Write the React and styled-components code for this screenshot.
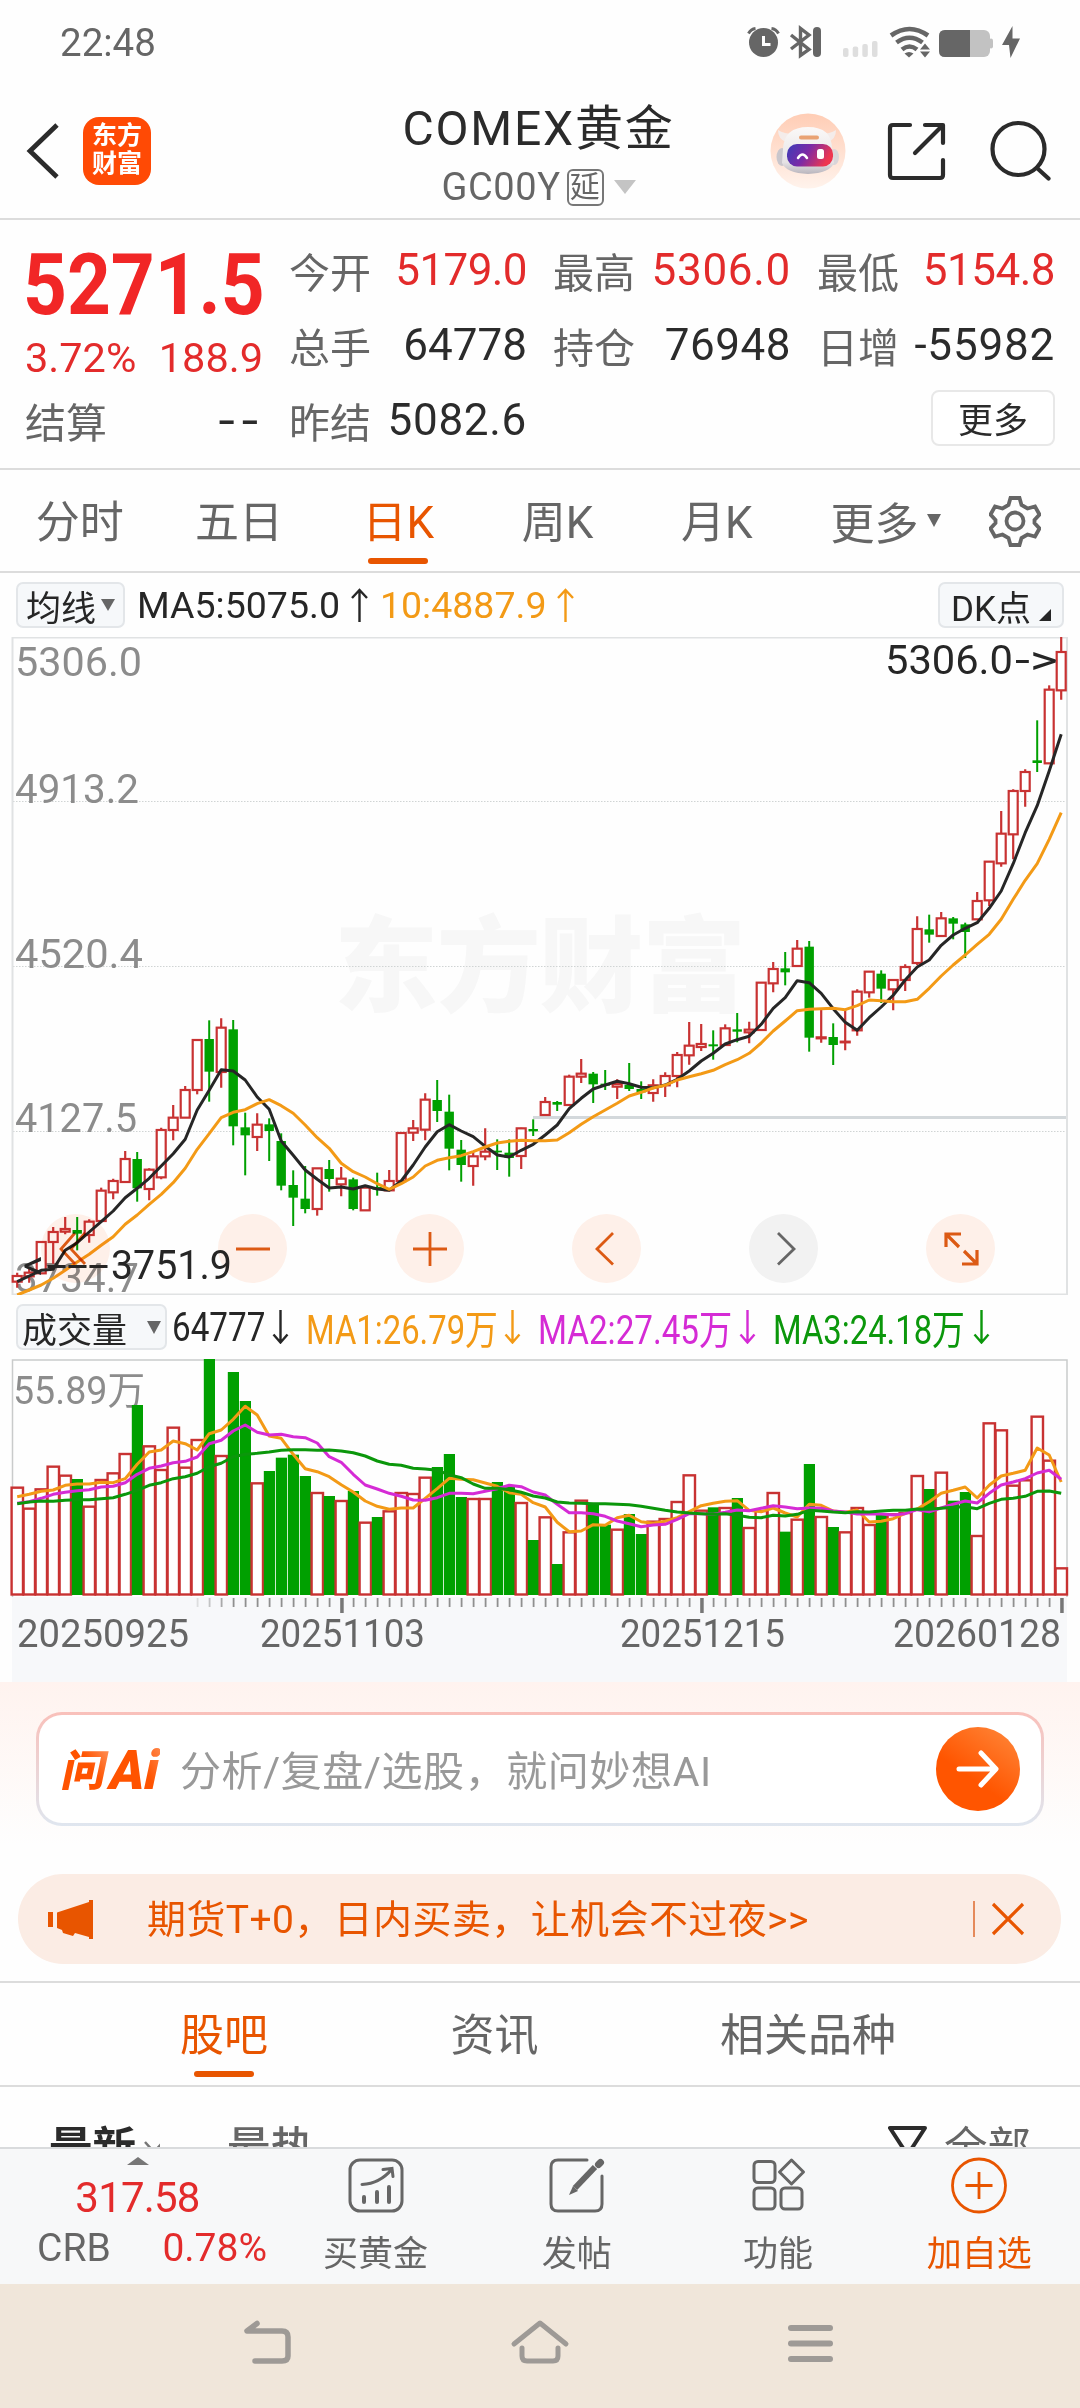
import React from "react";
import styled, { createGlobalStyle } from "styled-components";

const GlobalStyle = createGlobalStyle`
  * {
    box-sizing: border-box;
  }

  body {
    margin: 0;
    background: #fefefe;
    font-family: Roboto, "Noto Sans CJK SC", sans-serif;
    color: #2b2b2b;
  }

  svg {
    display: block;
    flex: none;
  }
`;

const RED = "#c83232";
const GREEN = "#00a000";
const BLACK = "#262626";
const YELLOW = "#f39a16";
const PURPLE = "#d52bd5";
const DGREEN = "#0b970b";
const ACCENT = "#e85500";

const PITCH = 12;
const FIRST_X = 17.2;
const xOf = (i) => FIRST_X + i * PITCH;

// [type, high, body top, body bottom, low], in thirds of a pixel
const candles = [
  ["r", 935, 945, 962, 980], ["r", 920, 935, 946, 965], ["r", 843, 843, 937, 937],
  ["r", 798, 813, 843, 908], ["r", 768, 804, 812, 820], ["g", 768, 807, 818, 868],
  ["r", 775, 782, 822, 845], ["r", 680, 689, 780, 780], ["r", 653, 660, 694, 715],
  ["r", 570, 594, 663, 663], ["g", 573, 594, 682, 722], ["r", 622, 626, 684, 718],
  ["r", 500, 507, 649, 655], ["r", 432, 470, 507, 538], ["r", 375, 387, 470, 470],
  ["r", 237, 237, 387, 400], ["g", 178, 234, 332, 422], ["r", 172, 200, 333, 380],
  ["g", 177, 205, 496, 553], ["g", 455, 499, 523, 643], ["r", 457, 491, 528, 570],
  ["g", 472, 490, 510, 600], ["g", 517, 540, 674, 688], ["g", 628, 672, 710, 795],
  ["g", 615, 713, 744, 757], ["r", 622, 622, 744, 764], ["g", 597, 624, 654, 692],
  ["r", 618, 653, 670, 706], ["g", 650, 655, 744, 748], ["r", 678, 680, 748, 748],
  ["g", 635, 678, 686, 704], ["r", 627, 660, 688, 688], ["r", 516, 516, 660, 660],
  ["r", 477, 502, 515, 540], ["r", 397, 416, 506, 538], ["g", 357, 417, 450, 483],
  ["g", 401, 452, 563, 628], ["g", 537, 566, 612, 662], ["r", 570, 586, 615, 674],
  ["r", 502, 572, 586, 598], ["g", 535, 569, 574, 627], ["g", 535, 575, 591, 647],
  ["r", 500, 502, 585, 624], ["g", 475, 504, 511, 525], ["r", 408, 423, 462, 462],
  ["g", 420, 423, 431, 450], ["r", 341, 347, 432, 432], ["r", 294, 338, 347, 366],
  ["g", 333, 338, 370, 426], ["g", 327, 368, 374, 387], ["r", 355, 369, 377, 414],
  ["g", 306, 372, 384, 390], ["g", 361, 384, 394, 414], ["r", 355, 373, 396, 422],
  ["r", 334, 345, 373, 408], ["r", 273, 282, 345, 379], ["r", 183, 254, 283, 311],
  ["r", 189, 249, 258, 270], ["g", 208, 250, 256, 296], ["r", 190, 202, 252, 252],
  ["g", 156, 205, 212, 244], ["r", 182, 206, 214, 247], ["r", 65, 65, 207, 207],
  ["r", 3, 24, 67, 94], ["g", -27, 22, 34, 73], ["r", -63, -37, 15, 18],
  ["g", -60, -43, 230, 272], ["r", 145, 229, 232, 245], ["g", 187, 228, 252, 312],
  ["r", 145, 242, 244, 268], ["r", 85, 92, 208, 224], ["r", 32, 32, 94, 110],
  ["g", 28, 38, 83, 126], ["r", 55, 57, 85, 148], ["r", 10, 18, 57, 90],
  ["r", -134, -96, 6, 12], ["g", -139, -95, -79, -55], ["r", -147, -128, -75, -75],
  ["g", -132, -128, -112, -65], ["g", -115, -110, -87, -9], ["r", -207, -180, -125, -125],
  ["r", -298, -298, -182, -165], ["r", -450, -382, -293, -283], ["r", -515, -510, -380, -305],
  ["r", -575, -567, -510, -463], ["g", -722, -602, -594, -567], ["r", -827, -814, -593, -593],
  ["r", -972, -927, -812, -784],
];

const ma5 = [
  962, 945, 928, 925, 868, 845, 813, 782, 750, 710, 682, 652, 615, 578, 535, 447, 388, 326, 330,
  357, 408, 445, 540, 583, 627, 655, 681, 678, 684, 674, 684, 688, 660, 612, 558, 512, 491, 510,
  527, 556, 582, 588, 568, 550, 522, 492, 443, 412, 384, 372, 361, 368, 379, 380, 372, 355, 330,
  300, 277, 249, 236, 226, 190, 142, 110, 59, 65, 97, 143, 184, 208, 170, 138, 103, 57, 18, -3,
  -47, -78, -98, -115, -158, -210, -292, -385, -466, -570, -680,
];

const ma10 = [
  1002, 987, 972, 952, 928, 903, 880, 853, 827, 790, 762, 730, 700, 665, 622, 565, 518, 470, 454,
  446, 428, 416, 434, 457, 492, 530, 562, 607, 632, 648, 668, 685, 668, 648, 615, 598, 590, 584,
  572, 558, 546, 541, 538, 539, 539, 537, 515, 490, 467, 447, 427, 405, 394, 381, 373, 357, 347,
  338, 328, 311, 296, 277, 246, 210, 180, 149, 145, 143, 142, 146, 134, 117, 119, 122, 122, 115,
  82, 45, 12, -18, -50, -80, -125, -185, -242, -292, -365, -445,
];

const volumes = [
  560, 623, 565, 497, 524, 537, 617, 537, 517, 459, 315, 436, 507, 380, 500, 417, 177, 465, 216,
  303, 547, 513, 473, 464, 528, 576, 588, 600, 573, 665, 651, 631, 576, 579, 530, 501, 462, 591,
  594, 594, 546, 560, 606, 720, 649, 792, 694, 599, 615, 674, 686, 642, 702, 662, 654, 603, 523,
  629, 622, 621, 594, 681, 630, 576, 695, 656, 492, 648, 681, 694, 621, 672, 640, 640, 636, 525,
  567, 515, 602, 576, 705, 367, 388, 554, 538, 347, 479, 802,
];

const volMa1 = [
  587, 580, 571, 567, 553, 549, 549, 544, 545, 533, 490, 453, 447, 420, 428, 447, 398, 387, 355,
  316, 342, 405, 412, 460, 503, 512, 527, 551, 573, 600, 616, 625, 621, 621, 592, 563, 532, 535,
  536, 546, 556, 575, 580, 605, 618, 664, 692, 690, 671, 673, 650, 643, 662, 667, 661, 650, 632,
  614, 607, 601, 599, 628, 632, 621, 636, 648, 610, 613, 630, 634, 627, 663, 661, 653, 637, 624,
  602, 577, 568, 558, 591, 553, 525, 517, 508, 441, 462, 543,
];

const volMa2 = [
  607, 602, 592, 580, 574, 569, 566, 558, 556, 545, 520, 502, 495, 485, 481, 468, 428, 418, 390,
  372, 394, 402, 400, 407, 410, 426, 467, 484, 520, 552, 564, 577, 586, 597, 598, 590, 577, 577,
  578, 571, 563, 553, 557, 573, 582, 610, 635, 635, 638, 646, 660, 668, 677, 672, 670, 655, 638,
  638, 640, 634, 627, 629, 622, 614, 618, 623, 621, 622, 630, 633, 639, 638, 639, 642, 638, 626,
  632, 621, 610, 600, 606, 577, 552, 543, 533, 516, 508, 535,
];

const volMa3 = [
  608, 603, 600, 601, 598, 596, 596, 593, 590, 580, 568, 553, 545, 533, 527, 517, 497, 487, 467,
  460, 457, 453, 448, 446, 446, 448, 447, 450, 455, 465, 480, 490, 493, 502, 504, 508, 521, 530,
  549, 562, 562, 566, 574, 585, 591, 603, 606, 607, 608, 608, 610, 611, 616, 622, 628, 633, 636,
  638, 640, 638, 643, 649, 650, 643, 645, 640, 628, 630, 633, 635, 632, 633, 630, 628, 628, 624,
  625, 622, 619, 617, 623, 607, 595, 592, 586, 571, 570, 577,
];

// closed above the previous day although the candle itself is green
const RISING_VOLUME = 85;

const linePoints = (list, offset) =>
  list.map((v, i) => `${xOf(i)},${(v / 3 + offset).toFixed(1)}`).join(" ");

const Page = styled.div`
  width: 1080px;
  height: 2408px;
  display: flex;
  flex-direction: column;
  overflow: hidden;
  background: #fefefe;
`;

const StatusBar = styled.div`
  height: 84px;
  padding: 0 60px;
  display: flex;
  justify-content: space-between;
  align-items: center;
  font-size: 38.5px;
  color: #666;
`;

const Header = styled.header`
  height: 136px;
  padding: 0 29px 0 26px;
  display: grid;
  grid-template-columns: 1fr 290px 1fr;
  border-bottom: 2px solid #dcdcdc;
`;

const HeaderLeft = styled.div`
  display: flex;
  align-items: center;
  gap: 23px;
`;

const AppLogo = styled.div`
  width: 68px;
  height: 68px;
  border-radius: 16px;
  background: #ff4a05;
  color: #fff;
  font-size: 25px;
  font-weight: 700;
  line-height: 28px;
  text-align: center;
  padding-top: 5px;
`;

const HeaderTitle = styled.div`
  display: flex;
  flex-direction: column;
  align-items: center;
  white-space: nowrap;

  h1 {
    margin: 16px 0 0;
    font-size: 48px;
    font-weight: 400;
    line-height: 58px;
    letter-spacing: 1.8px;
  }
`;

const Code = styled.div`
  display: flex;
  align-items: center;
  margin-top: 4px;
  height: 50px;
  font-size: 38px;
  letter-spacing: 0.6px;
  color: #666;
`;

const DelayTag = styled.span`
  width: 37px;
  height: 37px;
  margin: 0 10px 0 6px;
  border: 2px solid #777;
  border-radius: 6px;
  font-size: 30px;
  line-height: 32px;
  text-align: center;
`;

const Triangle = styled.i`
  border: solid transparent;
  border-width: ${(p) => p.$h}px ${(p) => p.$w / 2}px 0;
  border-top-color: ${(p) => p.$color || "#666"};
`;

const HeaderRight = styled.div`
  display: flex;
  align-items: center;
  justify-content: flex-end;
`;

const Quote = styled.section`
  height: 250px;
  padding: 12px 24px 0 25px;
  display: grid;
  grid-template-columns: repeat(4, 238px);
  grid-template-rows: repeat(3, 75px);
  column-gap: 26px;
  border-bottom: 2px solid #dcdcdc;
`;

const PriceBox = styled.div`
  grid-row: 1 / 3;
  color: #f12626;
`;

const Price = styled.div`
  height: 103px;
  margin-left: -2px;
  font-size: 85px;
  font-weight: 700;
  line-height: 107px;
  white-space: nowrap;
  transform: scaleX(0.9);
  transform-origin: left;
`;

const Change = styled.div`
  display: flex;
  justify-content: space-between;
  font-size: 41.5px;
  line-height: 46px;
  color: #e32b2b;
`;

const Stat = styled.div`
  display: flex;
  justify-content: space-between;
  align-items: center;
  white-space: nowrap;
  font-size: 41px;
  color: #666;

  b {
    font-size: 44px;
    font-weight: 400;
    letter-spacing: ${(p) => p.$ls || 0}px;
    color: ${(p) => (p.$up ? "#e32b2b" : "#2b2b2b")};
  }
`;

const Dashes = styled.b`
  && {
    font-family: Inter, sans-serif;
    letter-spacing: 3px;
  }
`;

const MoreButton = styled.button`
  grid-column: 4;
  justify-self: end;
  align-self: center;
  width: 124px;
  height: 56px;
  margin-bottom: 4px;
  padding: 0 0 2px;
  border: 2px solid #e8e8e8;
  border-radius: 8px;
  background: #fff;
  font: inherit;
  font-size: 35px;
  color: #2b2b2b;
`;

const PeriodTabs = styled.nav`
  height: 103px;
  display: flex;
  border-bottom: 2px solid #dcdcdc;
`;

const Tab = styled.div`
  flex: 0 0 ${(p) => p.$w}px;
  display: flex;
  flex-direction: column;
  align-items: center;
  padding-top: 19px;
  font-size: 44px;
  line-height: 68px;
  white-space: nowrap;
  color: ${(p) => (p.$active ? ACCENT : "#666")};

  &::after {
    content: "";
    width: 60px;
    height: 6px;
    margin-top: 1px;
    border-radius: 3px;
    background: ${(p) => (p.$active ? ACCENT : "transparent")};
  }
`;

const TabMore = styled.div`
  flex: 1;
  display: flex;
  align-items: center;
  padding-left: 34px;
  font-size: 44px;
  color: #666;

  i {
    margin: 0 48px 0 9px;
  }
`;

const Legend = styled.div`
  height: ${(p) => p.$h}px;
  padding: 0 16px;
  display: flex;
  align-items: center;
  font-size: 37.5px;
  white-space: nowrap;
`;

const Chip = styled.div`
  flex: none;
  width: ${(p) => p.$w}px;
  height: 46px;
  padding: 0 ${(p) => p.$pad || 8}px;
  display: flex;
  align-items: center;
  justify-content: space-between;
  border: 2px solid #e3e6e9;
  border-radius: 7px;
  background: #f6f8fa;
  font-size: 35px;
  color: ${BLACK};
`;

const LegendItem = styled.span`
  display: flex;
  align-items: center;
  margin-left: ${(p) => p.$ml}px;
  color: ${(p) => p.$color};

  svg {
    margin-left: 11px;
  }
`;

const VolumeItem = styled(LegendItem)`
  flex: 0 0 ${(p) => p.$w}px;
  justify-content: space-between;
  font-size: 40px;

  svg {
    margin-left: 0;
  }
`;

// squeezes the text into its box without changing the glyph height
const Narrow = styled.span`
  flex: 0 0 ${(p) => p.$w}px;
  width: ${(p) => p.$w}px;
  transform: scaleX(${(p) => p.$scale});
  transform-origin: left;
`;

const Spacer = styled.div`
  flex: 1;
`;

const ChartBox = styled.div`
  position: relative;
  height: 658px;
`;

const Controls = styled.div`
  position: absolute;
  left: 41px;
  top: 577px;
  display: flex;
  gap: 108px;
`;

const RoundButton = styled.div`
  width: 69px;
  height: 69px;
  border-radius: 50%;
  display: grid;
  place-items: center;
  mix-blend-mode: multiply;
  background: ${(p) => (p.$muted ? "#f3f3f3" : "#fff1ea")};
  color: ${(p) => (p.$muted ? "#666" : "#dd5a14")};
`;

const AskSection = styled.section`
  height: 192px;
  padding: 30px 36px 0;
  background: linear-gradient(#fff3ef, #fefefe 85%);
`;

const AskBox = styled.div`
  height: 114px;
  padding: 0 21px;
  display: flex;
  align-items: center;
  border: 3px solid transparent;
  border-radius: 26px;
  background:
    linear-gradient(#fff, #fff) padding-box,
    linear-gradient(#f9c0ba, #dfe6ef) border-box;
`;

const AskHint = styled.div`
  flex: 1;
  margin: -2px 0 0 20px;
  font-size: 41px;
  letter-spacing: 0.6px;
  color: #999;
`;

const SendButton = styled.div`
  width: 84px;
  height: 84px;
  border-radius: 50%;
  display: grid;
  place-items: center;
  background: linear-gradient(215deg, #ff8a3d, #ff5500 60%);
`;

const Banner = styled.div`
  height: 90px;
  margin: 0 19px 17px 18px;
  padding: 0 36px 0 28px;
  display: flex;
  align-items: center;
  border-radius: 45px;
  background: #fbece4;
  color: ${ACCENT};
`;

const BannerText = styled.div`
  flex: 1;
  margin: -6px 0 0 53px;
  font-size: 39px;
  letter-spacing: 0.4px;
`;

const Divider = styled.i`
  width: 2px;
  height: 36px;
  margin-right: 16px;
  background: #e58a5b;
`;

const InfoTabs = styled.nav`
  height: 106px;
  padding-left: 89px;
  display: flex;
  border-top: 2px solid #dcdcdc;
  border-bottom: 2px solid #dcdcdc;
`;

const ListHead = styled.div`
  height: 60px;
  padding: 33px 49px 0;
  display: flex;
  align-items: flex-start;
  overflow: hidden;
  font-size: 43.5px;
  line-height: 58px;
  color: #666;

  strong {
    color: #2b2b2b;
  }
`;

const HotTab = styled.div`
  flex: 1;
  margin-left: 67px;
  font-weight: 500;
`;

const FilterIcon = styled.svg`
  margin: 5px 16px 0 0;
`;

const BottomBar = styled.div`
  height: 137px;
  display: flex;
  background: #f7f8f9;
  border-top: 2px solid #d9dbdd;
`;

const IndexBox = styled.div`
  flex: 0 0 275px;
  display: flex;
  flex-direction: column;
  align-items: center;
  padding-top: 8px;
  font-size: 42px;
  letter-spacing: -0.8px;
  color: #e32b2b;
`;

const IndexValue = styled.div`
  margin-top: 8px;
  line-height: 50px;
`;

const IndexRow = styled.div`
  align-self: stretch;
  display: flex;
  justify-content: space-between;
  padding: 0 8px 0 37px;
  font-size: 39px;
  letter-spacing: 0;
  line-height: 50px;

  span {
    color: #666;
  }
`;

const Action = styled.div`
  flex: 1;
  display: flex;
  flex-direction: column;
  align-items: center;
  padding-top: 7px;
  font-size: 35px;
  line-height: 40px;
  color: ${(p) => (p.$hot ? ACCENT : "#666")};

  svg {
    margin-bottom: 21px;
  }
`;

const SystemNav = styled.div`
  flex: 1;
  padding: 35px 244px 0 239px;
  display: flex;
  justify-content: space-between;
  background: #f0e6da;
  color: #9e9a96;
`;

const StatusIcons = () => (
  <svg width="274" height="34" viewBox="746 25 274 34" fill="#666">
    <circle cx="763.5" cy="42.5" r="14.5" />
    <path d="M748.5 33.5Q751 29 755.5 28.5M778.5 33.5Q776 29 771.5 28.5" fill="none" stroke="#666" strokeWidth="3" />
    <path d="M763.5 36v8.500h7" fill="none" stroke="#fff" strokeWidth="3" />
    <path d="M791 35l18 14.500-8.500 6V28.500l8.500 6.500-18 14" fill="none" stroke="#666" strokeWidth="3.4" />
    <rect x="813" y="27" width="8" height="30" rx="4" />
    <g fill="#dedede">
      <rect x="843" y="48" width="5.5" height="9" rx="2" />
      <rect x="852.7" y="46.5" width="5.5" height="10.500" rx="2" />
      <rect x="862.3" y="44" width="5.5" height="13" rx="2" />
      <rect x="872" y="41" width="5.5" height="16" rx="2" />
    </g>
    <g fill="none" stroke="#666" strokeWidth="4.6">
      <path d="M891 35.500Q909.500 22.500 928 35.500" />
      <path d="M896.500 42.500Q909.500 33 922.500 42.500" />
      <path d="M902 49.500Q909.500 43.500 917 49.500" />
    </g>
    <path d="M904.500 53.500q4.500-3 9 0l-4.500 4zM920 49.500l5-6 5 6zM920 51.500l5 6 5-6z" />
    <rect x="939" y="30" width="51" height="27" rx="6" fill="#c2c2c2" />
    <path d="M945 30h25v27h-25q-6 0-6-6V36q0-6 6-6z" />
    <rect x="989" y="38.5" width="4" height="10" rx="2" fill="#c2c2c2" />
    <path d="M1012.500 26l-10.500 19h7l1.500 13 9.500-19.500h-7.500z" />
  </svg>
);

const Robot = () => (
  <svg width="76" height="76" viewBox="0 0 76 76">
    <defs>
      <linearGradient id="halo" x1="0" y1="0" x2="0" y2="1">
        <stop offset="0" stopColor="#ffcdb5" />
        <stop offset="1" stopColor="#fff3ec" />
      </linearGradient>
      <linearGradient id="visor" x1="0" y1="0" x2="1" y2="0.3">
        <stop offset="0" stopColor="#3b3cb8" />
        <stop offset="0.5" stopColor="#7b2aa6" />
        <stop offset="1" stopColor="#ee3650" />
      </linearGradient>
      <linearGradient id="shell" x1="0" y1="0" x2="0" y2="1">
        <stop offset="0" stopColor="#fbf9f8" />
        <stop offset="0.75" stopColor="#e6e3e5" />
        <stop offset="1" stopColor="#b9b5bd" />
      </linearGradient>
    </defs>
    <circle cx="38" cy="38" r="37.5" fill="url(#halo)" />
    <path d="M8 17q0 9 8 12l8-8q-10 0-16-4zM66 17q0 9-8 12l-8-8q10 0 16-4z" fill="#f4ecea" />
    <ellipse cx="12" cy="44" rx="5.5" ry="9" fill="#c9c6cc" />
    <ellipse cx="64" cy="44" rx="5" ry="8" fill="#d9d5d9" />
    <path d="M13 36Q14 14 38 14T62 36L64 50Q60 60 38 61 16 60 12 50z" fill="url(#shell)" />
    <rect x="17" y="31" width="46" height="22.5" rx="10" fill="url(#visor)" />
    <rect x="29" y="22.5" width="20" height="4" rx="2" fill="#e9a273" />
    <path d="M28 45q4.500-7 9 0" fill="none" stroke="#fff" strokeWidth="2.5" strokeLinecap="round" />
    <rect x="47" y="36" width="7" height="10" rx="2.5" fill="#fff" />
  </svg>
);

const Arrow = ({ down }) => (
  <svg width="17" height="34" viewBox="0 0 17 34" fill="none" stroke="currentColor" strokeWidth="2.4">
    {down ? <path d="M8.500 0v32M1.500 24.500l7 8 7-8" /> : <path d="M8.500 34V2M1 10l7.500-8L16 10" />}
  </svg>
);

const Label = ({ x, y, w, size = 41, fill = "#8c8c8c", children }) => (
  <text x={x} y={y} fontSize={size} fill={fill} textLength={w} lengthAdjust="spacingAndGlyphs">
    {children}
  </text>
);

const Candle = ({ data, x }) => {
  const [type, hi, top, bottom, lo] = data;
  const y = (v) => v / 3 + 324;
  if (type === "g") {
    return (
      <g fill={GREEN}>
        <rect x={x - 1} y={y(hi)} width="2" height={(lo - hi) / 3} />
        <rect x={x - 4.7} y={y(top)} width="9.4" height={(bottom - top) / 3} />
      </g>
    );
  }
  return (
    <g stroke={RED} strokeWidth="2.2">
      <path d={`M${x} ${y(hi)}V${y(top)}M${x} ${y(bottom)}V${y(lo)}`} />
      <rect x={x - 4.5} y={y(top)} width="9" height={(bottom - top) / 3} fill="#fff" />
    </g>
  );
};

const PriceChart = () => (
  <svg width="1080" height="658">
    <g fill="#f7f7f7" fontSize="104" fontWeight="900">
      <text x="334" y="367" textLength="412">
        东方财富
      </text>
    </g>
    <path d="M13 164.500H1067M13 329.500H1067M13 494.500H1067" stroke="#d0d4d4" strokeWidth="1" strokeDasharray="1.5 1.5" />
    <path d="M533 480.500H1067" stroke="#d3d8db" strokeWidth="3" />
    <rect x="12.5" y="0.5" width="1054.5" height="657" fill="none" stroke="#e0e2e3" strokeWidth="2" />
    <Label x="15" y="38.5" w="127">5306.0</Label>
    <Label x="15" y="165.5" w="124">4913.2</Label>
    <Label x="15" y="331" w="128">4520.4</Label>
    <Label x="15" y="495" w="122">4127.5</Label>
    <Label x="15" y="655" w="124">3734.7</Label>
    {candles.map((c, i) => (
      <Candle key={i} data={c} x={xOf(i)} />
    ))}
    <g fill="none" strokeWidth="3" strokeLinejoin="round">
      <polyline points={linePoints(ma5, 324)} stroke={BLACK} />
      <polyline points={linePoints(ma10, 324)} stroke={YELLOW} />
    </g>
    <Label x="885" y="37" w="128" fill={BLACK}>5306.0</Label>
    <Label x="1015" y="37" w="43" fill={BLACK}>{"->"}</Label>
    <Label x="23" y="642" w="21" fill={BLACK}>{"<"}</Label>
    <Label x="46" y="642" w="63" fill={BLACK}>---</Label>
    <Label x="111" y="642" w="121" fill={BLACK}>3751.9</Label>
  </svg>
);

const VolumeChart = () => (
  <svg width="1080" height="238">
    <path d="M12.500 238V1H1067V238" fill="none" stroke="#c9cbcb" strokeWidth="1.5" />
    <Label x="13" y="44.5" w="132" size={39}>55.89万</Label>
    {volumes.map((v, i) => {
      const y = v / 3 - 58;
      return candles[i][0] === "g" && i !== RISING_VOLUME ? (
        <rect key={i} x={xOf(i) - 5.4} y={y - 1} width="11.2" height={237 - y} fill={GREEN} />
      ) : (
        <rect key={i} x={xOf(i) - 5.6} y={y} width="11.4" height={235.5 - y} fill="#fff" stroke={RED} strokeWidth="2.4" />
      );
    })}
    <g fill="none" strokeWidth="3" strokeLinejoin="round">
      <polyline points={linePoints(volMa1, -58)} stroke={YELLOW} />
      <polyline points={linePoints(volMa2, -58)} stroke={PURPLE} />
      <polyline points={linePoints(volMa3, -58)} stroke={DGREEN} />
    </g>
  </svg>
);

const DateAxis = () => (
  <svg width="1080" height="85">
    <rect x="12" width="1055" height="85" fill="#f7f8fa" />
    {candles.map((c, i) => {
      if (i < 15) return null;
      const major = i === 27 || i === 57 || i === 87;
      return (
        <rect
          key={i}
          x={xOf(i) - (major ? 1 : 0.5)}
          y="1"
          width={major ? 3.5 : 1.8}
          height={major ? 15 : 9}
          fill={major ? "#777" : "#8f8f8f"}
          opacity={Math.min(1, (i - 14) / 4)}
        />
      );
    })}
    <Label x="17" y="50" w="172" size={38} fill="#666">20250925</Label>
    <Label x="260" y="50" w="165" size={38} fill="#666">20251103</Label>
    <Label x="620" y="50" w="165" size={38} fill="#666">20251215</Label>
    <Label x="893" y="50" w="168" size={38} fill="#666">20260128</Label>
  </svg>
);

const ControlIcon = ({ d, width = 2.8 }) => (
  <svg width="36" height="36" viewBox="0 0 36 36" fill="none" stroke="currentColor" strokeWidth={width}>
    <path d={d} />
  </svg>
);

const AskLogo = () => (
  <svg width="100" height="60" viewBox="0 0 100 60">
    <defs>
      <linearGradient id="ask" x1="0" y1="1" x2="1" y2="0">
        <stop offset="0.6" stopColor="#ff5300" />
        <stop offset="1" stopColor="#ff9c68" />
      </linearGradient>
    </defs>
    <g fontWeight="900" fill="url(#ask)" transform="skewX(-12)">
      <text x="10" y="47" fontSize="43" textLength="44" lengthAdjust="spacingAndGlyphs">
        问
      </text>
      <text x="57" y="49.5" fontSize="55" textLength="49" lengthAdjust="spacingAndGlyphs">
        Ai
      </text>
    </g>
  </svg>
);

const periods = ["分时", "五日", "日K", "周K", "月K"];

const App = () => {
  return (
    <>
      <GlobalStyle />
      <Page>
        <StatusBar>
          <span>22:48</span>
          <StatusIcons />
        </StatusBar>

        <Header>
          <HeaderLeft>
            <svg width="34" height="56" viewBox="0 0 34 56" fill="none" stroke="#2b2b2b" strokeWidth="4.8">
              <path d="M31 2L4 28l27 26" />
            </svg>
            <AppLogo>
              东方
              <br />
              财富
            </AppLogo>
          </HeaderLeft>
          <HeaderTitle>
            <h1>COMEX黄金</h1>
            <Code>
              GC00Y
              <DelayTag>延</DelayTag>
              <Triangle $w={22} $h={14} $color="#c4c4c4" />
            </Code>
          </HeaderTitle>
          <HeaderRight>
            <Robot />
            <svg width="205" height="62" viewBox="846 120 205 62" fill="none" stroke="#2b2b2b" strokeWidth="4.2" strokeLinecap="round" strokeLinejoin="round">
              <path d="M910 125H893q-3 0-3 3v47q0 3 3 3h47q3 0 3-3V160M925 125h18v18M942 126l-27 27" />
              <circle cx="1018.5" cy="149" r="26" />
              <path d="M1037 168l11.500 10.500" />
            </svg>
          </HeaderRight>
        </Header>

        <Quote>
          <PriceBox>
            <Price>5271.5</Price>
            <Change>
              <span>3.72%</span>
              <span>188.9</span>
            </Change>
          </PriceBox>
          <Stat $up $ls={-0.6}>今开<b>5179.0</b></Stat>
          <Stat $up $ls={0.7}>最高<b>5306.0</b></Stat>
          <Stat $up $ls={-0.5}>最低<b>5154.8</b></Stat>
          <Stat>总手<b>64778</b></Stat>
          <Stat $ls={0.5}>持仓<b>76948</b></Stat>
          <Stat $ls={0.8}>日增<b>-55982</b></Stat>
          <Stat>结算<Dashes>--</Dashes></Stat>
          <Stat $ls={0.7}>昨结<b>5082.6</b></Stat>
          <MoreButton>更多</MoreButton>
        </Quote>

        <PeriodTabs>
          {periods.map((p) => (
            <Tab key={p} $w={159.3} $active={p === "日K"}>
              {p}
            </Tab>
          ))}
          <TabMore>
            更多
            <Triangle $w={15} $h={13} />
            <svg width="52" height="52" viewBox="0 0 52 52" fill="none" stroke="#666" strokeWidth="3.8">
              <path d="M21.500 3h9l2 7 6 3.500 7.500-2 4.500 8-5 5.500v3l5 5.500-4.500 8-7.500-2-6 3.500-2 7h-9l-2-7-6-3.500-7.500 2-4.500-8 5-5.500v-3l-5-5.500 4.500-8 7.500 2 6-3.500z" />
              <circle cx="26" cy="26" r="8.5" />
            </svg>
          </TabMore>
        </PeriodTabs>

        <Legend $h={64}>
          <Chip $w={109}>
            均线
            <Triangle $w={14} $h={12} />
          </Chip>
          <LegendItem $ml={12} $color={BLACK}>
            MA5:5075.0
            <Arrow />
          </LegendItem>
          <LegendItem $ml={12} $color={YELLOW}>
            10:4887.9
            <Arrow />
          </LegendItem>
          <Spacer />
          <Chip $w={126} $pad={11}>
            DK点
            <svg width="12" height="34" viewBox="0 0 12 34">
              <path d="M12 21v12H0z" fill={BLACK} />
            </svg>
          </Chip>
        </Legend>

        <ChartBox>
          <PriceChart />
          <Controls>
            <RoundButton>
              <ControlIcon d="M17 2L3 18l14 15M27 2L13 18l14 15" />
            </RoundButton>
            <RoundButton>
              <ControlIcon d="M1 18h34" />
            </RoundButton>
            <RoundButton>
              <ControlIcon d="M1 18h34M18 1v34" />
            </RoundButton>
            <RoundButton>
              <ControlIcon d="M24 2L8 18l16 15.500" />
            </RoundButton>
            <RoundButton $muted>
              <ControlIcon d="M12 2l16 16-16 15.500" />
            </RoundButton>
            <RoundButton>
              <ControlIcon width={3.2} d="M3 16V3h15M3 3l13 13M34 19v14H19M34 33L21 20" />
            </RoundButton>
          </Controls>
        </ChartBox>

        <Legend $h={64}>
          <Chip $w={151} $pad={4}>
            成交量
            <Triangle $w={15} $h={13} />
          </Chip>
          <VolumeItem $ml={5} $w={117} $color={BLACK}>
            <Narrow $w={92} $scale={0.83}>64777</Narrow>
            <Arrow down />
          </VolumeItem>
          <VolumeItem $ml={17} $w={215} $color={YELLOW}>
            <Narrow $w={190} $scale={0.82}>MA1:26.79万</Narrow>
            <Arrow down />
          </VolumeItem>
          <VolumeItem $ml={17} $w={218} $color={PURPLE}>
            <Narrow $w={192} $scale={0.83}>MA2:27.45万</Narrow>
            <Arrow down />
          </VolumeItem>
          <VolumeItem $ml={17} $w={217} $color={DGREEN}>
            <Narrow $w={190} $scale={0.82}>MA3:24.18万</Narrow>
            <Arrow down />
          </VolumeItem>
        </Legend>
        <VolumeChart />
        <DateAxis />

        <AskSection>
          <AskBox>
            <AskLogo />
            <AskHint>分析/复盘/选股，就问妙想AI</AskHint>
            <SendButton>
              <svg width="44" height="40" viewBox="0 0 44 40" fill="none" stroke="#fff" strokeWidth="5" strokeLinecap="round" strokeLinejoin="round">
                <path d="M3 20h36M25 4l15 16-15 16" />
              </svg>
            </SendButton>
          </AskBox>
        </AskSection>

        <Banner>
          <svg width="48" height="40" viewBox="0 0 48 40" fill="currentColor">
            <path d="M2 13h5v15H2zM11 13.500L43 3V1h4v39h-4v-2L29 34l-2 3-10-3-1-3-5-2z" />
          </svg>
          <BannerText>期货T+0，日内买卖，让机会不过夜&gt;&gt;</BannerText>
          <Divider />
          <svg width="34" height="34" viewBox="0 0 34 34" fill="none" stroke="currentColor" strokeWidth="3.2">
            <path d="M2 2l30 30M32 2L2 32" />
          </svg>
        </Banner>

        <InfoTabs>
          <Tab $w={270} $active>股吧</Tab>
          <Tab $w={271}>资讯</Tab>
          <Tab $w={356}>相关品种</Tab>
        </InfoTabs>

        <ListHead>
          <strong>最新</strong>
          <svg width="24" height="40" viewBox="0 0 24 40" fill="none" stroke="#777" strokeWidth="2.5">
            <path d="M9 22l9 10 9-10" />
          </svg>
          <HotTab>最热</HotTab>
          <FilterIcon width="40" height="44" viewBox="0 0 40 44" fill="none" stroke="#2b2b2b" strokeWidth="4" strokeLinejoin="round">
            <path d="M2 3h35L24 23v18l-9-5V23z" />
          </FilterIcon>
          全部
        </ListHead>

        <BottomBar>
          <IndexBox>
            <svg width="22" height="8" viewBox="0 0 22 8">
              <path d="M0 8L11 0l11 8z" fill="#777" />
            </svg>
            <IndexValue>317.58</IndexValue>
            <IndexRow>
              <span>CRB</span>0.78%
            </IndexRow>
          </IndexBox>
          <Action>
            <svg width="58" height="58" viewBox="0 0 58 58" fill="none" stroke="currentColor" strokeWidth="3" strokeLinecap="round">
              <rect x="3" y="4" width="52" height="51" rx="10" />
              <path d="M15 28.500q18-1 30-15.500M36 13.500l9-1 1 8" />
              <path d="M17 41v5M30 36v10M42 31v15" strokeWidth="4" />
            </svg>
            买黄金
          </Action>
          <Action>
            <svg width="58" height="58" viewBox="0 0 58 58" fill="none" stroke="currentColor" strokeWidth="3" strokeLinecap="round">
              <path d="M39 4H10q-7 0-7 7v37q0 7 7 7h37q7 0 7-7V20" />
              <path d="M50.500 8.500l2-2" strokeWidth="7" />
              <path d="M47 11L27 32" strokeWidth="6" strokeLinecap="butt" />
              <path d="M25 30l5 5-9 4z" fill="currentColor" stroke="none" />
            </svg>
            发帖
          </Action>
          <Action>
            <svg width="58" height="58" viewBox="0 0 58 58" fill="none" stroke="currentColor" strokeWidth="3" strokeLinejoin="round">
              <rect x="5" y="5.5" width="21" height="21" rx="4" />
              <rect x="5" y="32" width="21" height="21" rx="4" />
              <rect x="32" y="32" width="21" height="21" rx="4" />
              <path d="M42.500 4l12 12-12 12-12-12z" />
            </svg>
            功能
          </Action>
          <Action $hot>
            <svg width="58" height="58" viewBox="0 0 58 58" fill="none" stroke="currentColor" strokeWidth="2.8">
              <circle cx="29" cy="29.5" r="26.5" />
              <path d="M15.500 29.500h27M29 16v27" />
            </svg>
            加自选
          </Action>
        </BottomBar>

        <SystemNav>
          <svg width="56" height="46" viewBox="0 0 56 46" fill="none" stroke="currentColor" strokeWidth="5.5" strokeLinecap="round" strokeLinejoin="round">
            <path d="M18 4.500L8 12h35q6 0 6 6v19q0 5-6 5H16" />
          </svg>
          <svg width="60" height="46" viewBox="0 0 60 46" fill="none" stroke="currentColor" strokeWidth="5" strokeLinecap="round" strokeLinejoin="round">
            <path d="M4 25L30 4l26 21M12 29v8q0 5 5 5h26q5 0 5-5v-8" />
          </svg>
          <svg width="52" height="46" viewBox="0 0 52 46" fill="none" stroke="currentColor" strokeWidth="6" strokeLinecap="round">
            <path d="M7 9h39M7 24.500h39M7 40h39" />
          </svg>
        </SystemNav>
      </Page>
    </>
  );
};

export default App;
